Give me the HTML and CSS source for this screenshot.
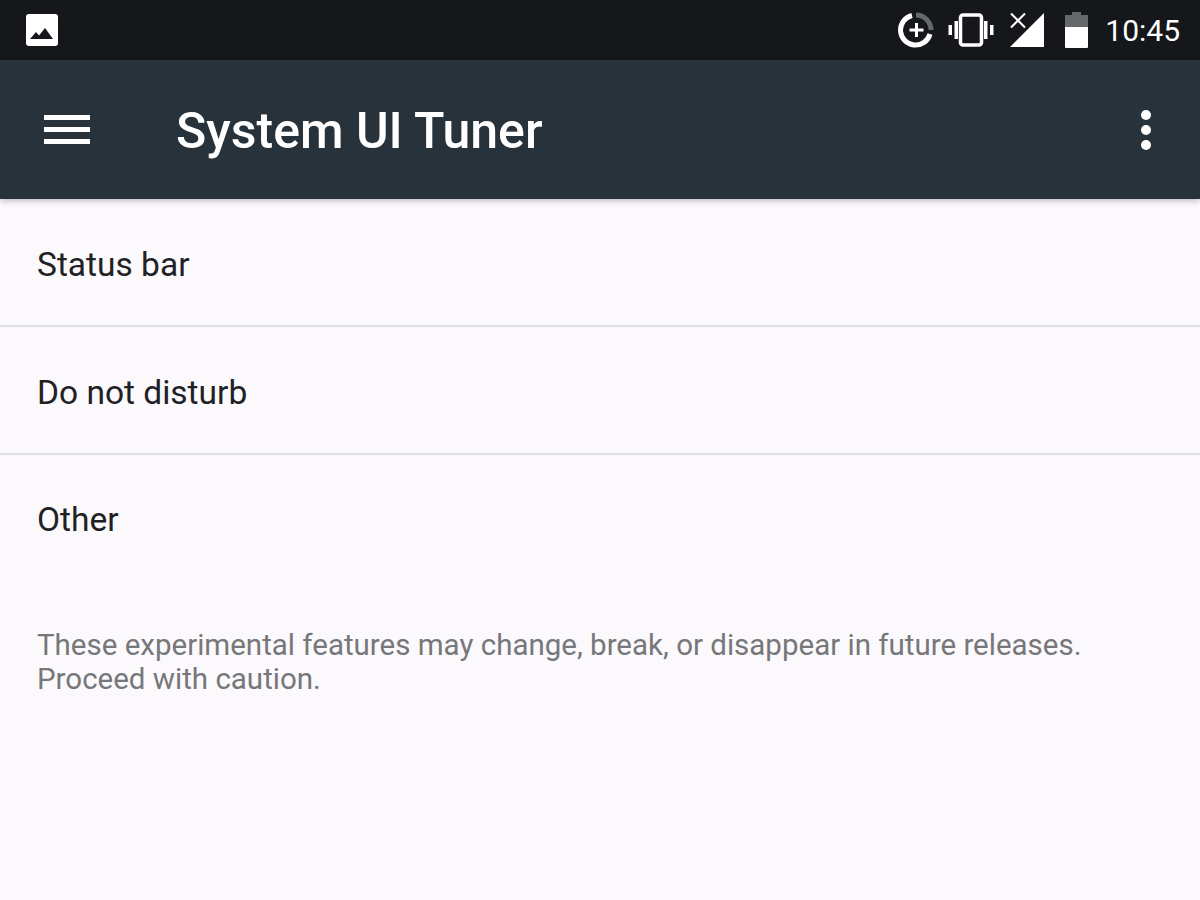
FILE: index.html
```html
<!DOCTYPE html>
<html lang="en">
<head>
    <meta charset="UTF-8">
    <title>System UI Tuner</title>
    <link rel="stylesheet" href="styles.css">
</head>
<body>
    <div class="status-bar">
        <svg class="picture-icon" width="34" height="34" viewBox="0 0 34 34">
            <rect x="1" y="1" width="32" height="32" rx="3" fill="#fff"/>
            <path d="M5 26 L11 19 L14 22.5 L20 15 L28 26 Z" fill="#15171b"/>
        </svg>
        <div class="status-icons">
            <svg class="data-icon" width="36" height="36" viewBox="0 0 36 36">
                <path d="M18 3 A15 15 0 0 1 33 18" fill="none" stroke="#66676a" stroke-width="5"/>
                <path d="M32 22 A15 15 0 1 1 14 3.5" fill="none" stroke="#fff" stroke-width="5"/>
                <path d="M17 11 H20 V16.5 H25.500 V19.500 H20 V25 H17 V19.500 H11.500 V16.500 H17 Z" fill="#fff"/>
            </svg>
            <svg class="vibrate-icon" width="46" height="34" viewBox="0 0 46 34">
                <rect x="12.500" y="2" width="21" height="30" rx="2.500" fill="none" stroke="#fff" stroke-width="3.500"/>
                <path d="M0.500 12 H4 V22 H0.500 Z M6.500 8 H10 V26 H6.500 Z M36 8 H39.500 V26 H36 Z M42 12 H45.500 V22 H42 Z" fill="#fff"/>
            </svg>
            <svg class="signal-icon" width="36" height="36" viewBox="0 0 36 36">
                <path d="M35 1 V35 H1 Z" fill="#fff"/>
                <path d="M1 1 L17 17 M17 1 L1 17" stroke="#15171b" stroke-width="6"/>
                <path d="M2 1.500 L16 15.500 M16 1.500 L2 15.500" stroke="#fff" stroke-width="2"/>
            </svg>
            <svg class="battery-icon" width="24" height="36" viewBox="0 0 24 36">
                <path d="M7 0 H16 V3 H23 V15 H0 V3 H7 Z" fill="#66676a"/>
                <path d="M0 15 H23 V35 Q23 36 22 36 H1 Q0 36 0 35 Z" fill="#fff"/>
            </svg>
            <span class="clock">10:45</span>
        </div>
    </div>

    <header class="toolbar">
        <div class="menu-btn">
            <span></span>
            <span></span>
            <span></span>
        </div>
        <h1>System UI Tuner</h1>
        <div class="more-btn">
            <span></span>
            <span></span>
            <span></span>
        </div>
    </header>

    <main>
        <div class="row">Status bar</div>
        <div class="row">Do not disturb</div>
        <div class="row last">Other</div>
        <p class="warning">These experimental features may change, break, or disappear in future releases. Proceed with caution.</p>
    </main>
</body>
</html>
```

FILE: styles.css
```css
html, body {
    height: 100%;
}
body {
    margin: 0;
    overflow: hidden;
    background-color: #fbf9fc;
    font-family: Roboto, "Liberation Sans", sans-serif;
}
.status-bar {
    height: 60px;
    display: flex;
    align-items: center;
    justify-content: space-between;
    padding: 0 20px 0 25px;
    background-color: #15171b;
}
.status-icons {
    display: flex;
    align-items: center;
}
.data-icon {
    margin-right: 14px;
}
.vibrate-icon {
    margin-right: 15px;
}
.signal-icon {
    margin-right: 20px;
}
.battery-icon {
    margin-right: 16px;
}
.clock {
    color: #fff;
    font-size: 30px;
}
.toolbar {
    height: 139px;
    display: flex;
    align-items: center;
    padding: 0 44px;
    background-color: #27323a;
    box-shadow: 0 2px 6px rgba(0,0,0,0.25);
    position: relative;
}
.menu-btn {
    width: 46px;
    display: flex;
    flex-direction: column;
    gap: 7px;
}
.menu-btn span {
    height: 5px;
    background-color: #fff;
}
.toolbar h1 {
    flex: 1;
    margin: 3px 0 0 86px;
    color: #fff;
    font-size: 50px;
    font-weight: 500;
}
.more-btn {
    display: flex;
    flex-direction: column;
    gap: 5px;
    margin-right: 5px;
}
.more-btn span {
    width: 10px;
    height: 10px;
    border-radius: 50%;
    background-color: #fff;
}
.row {
    height: 122px;
    display: flex;
    align-items: center;
    padding: 4px 0 0 37px;
    color: #212124;
    font-size: 33.500px;
    border-bottom: 2px solid #dfdfe1;
}
.row.last {
    height: 124px;
    padding-top: 2px;
    border-bottom: none;
}
.warning {
    margin: 0;
    padding: 47px 100px 0 37px;
    color: #77777a;
    font-size: 29.500px;
    line-height: 34px;
}
```
